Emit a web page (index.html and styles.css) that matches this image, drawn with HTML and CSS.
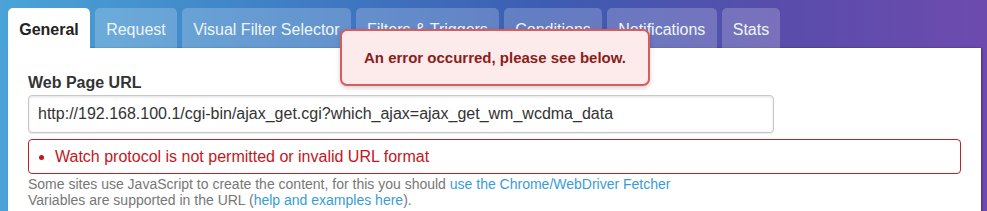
FILE: index.html
```html
<!DOCTYPE html>
<html lang="en">
<head>
<meta charset="utf-8">
<title>Edit watch</title>
<link rel="stylesheet" href="styles.css">
</head>
<body>
<div class="page">
  <nav class="tabs">
    <a class="tab active" href="#general">General</a>
    <a class="tab" href="#request">Request</a>
    <a class="tab" href="#visual">Visual Filter Selector</a>
    <a class="tab" href="#filters">Filters &amp; Triggers</a>
    <a class="tab" href="#conditions">Conditions</a>
    <a class="tab" href="#notifications">Notifications</a>
    <a class="tab" href="#stats">Stats</a>
  </nav>
  <div class="panel">
    <label class="field-label" for="url">Web Page URL</label>
    <input class="url-input" id="url" type="text" value="http://192.168.100.1/cgi-bin/ajax_get.cgi?which_ajax=ajax_get_wm_wcdma_data">
    <ul class="errors">
      <li>Watch protocol is not permitted or invalid URL format</li>
    </ul>
    <p class="help">Some sites use JavaScript to create the content, for this you should <a href="#fetcher">use the Chrome/WebDriver Fetcher</a><br>Variables are supported in the URL (<a href="#help">help and examples here</a>).</p>
  </div>
  <div class="toast">An error occurred, please see below.</div>
</div>
</body>
</html>
```
FILE: styles.css
```css
html, body {
  margin: 0;
  height: 100%;
}
body {
  font-family: "Liberation Sans", Arial, sans-serif;
  background: linear-gradient(to right, #4aa4d7 0%, #3f7dc4 30%, #3d5db2 55%, #5a4cab 80%, #6d4bae 100%);
  overflow: hidden;
}
.page {
  padding: 8px 6px 0 8px;
  height: 100%;
  box-sizing: border-box;
}
.tabs {
  display: flex;
  gap: 5px;
}
.tab {
  display: block;
  box-sizing: border-box;
  height: 40px;
  padding: 13px 11.2px 0;
  font-size: 16px;
  line-height: 18px;
  color: #eef5fb;
  text-decoration: none;
  background: rgba(255, 255, 255, 0.2);
  border-radius: 5px 5px 0 0;
  white-space: nowrap;
}
.tab.active {
  background: #fff;
  color: #222;
  font-weight: bold;
}
.panel {
  background: #fff;
  padding: 26px 20px 20px;
  height: 100%;
  box-shadow: 1px 0 2px rgba(0, 0, 0, 0.35);
}
.field-label {
  display: block;
  font-size: 16px;
  line-height: 18px;
  font-weight: bold;
  color: #333;
  margin-bottom: 3px;
}
.url-input {
  display: block;
  box-sizing: border-box;
  width: 80%;
  height: 38px;
  margin: 0;
  padding: 0 9px;
  font-family: "Liberation Sans", Arial, sans-serif;
  font-size: 16px;
  color: #333;
  border: 1px solid #c8c8c8;
  border-radius: 4px;
  box-shadow: inset 0 1px 3px rgba(0, 0, 0, 0.12), 0 1px 1px rgba(0, 0, 0, 0.08);
  outline: none;
}
.errors {
  margin: 6px 0 0;
  padding: 8px 0 7px 26px;
  border: 1px solid #bb2222;
  border-radius: 4px;
  font-size: 16px;
  line-height: 18px;
  color: #c4161c;
}
.help {
  margin: 2px 0 0;
  font-size: 14px;
  line-height: 16px;
  color: #777;
}
.help a {
  color: #389dd6;
  text-decoration: none;
}
.toast {
  position: absolute;
  left: 340px;
  top: 29px;
  width: 310px;
  height: 57px;
  box-sizing: border-box;
  display: flex;
  align-items: center;
  justify-content: center;
  background: #fdebeb;
  border: 2px solid #d75c5c;
  border-radius: 7px;
  box-shadow: 0 2px 5px rgba(0, 0, 0, 0.18);
  color: #8c1c1c;
  font-weight: bold;
  font-size: 15px;
}
```
